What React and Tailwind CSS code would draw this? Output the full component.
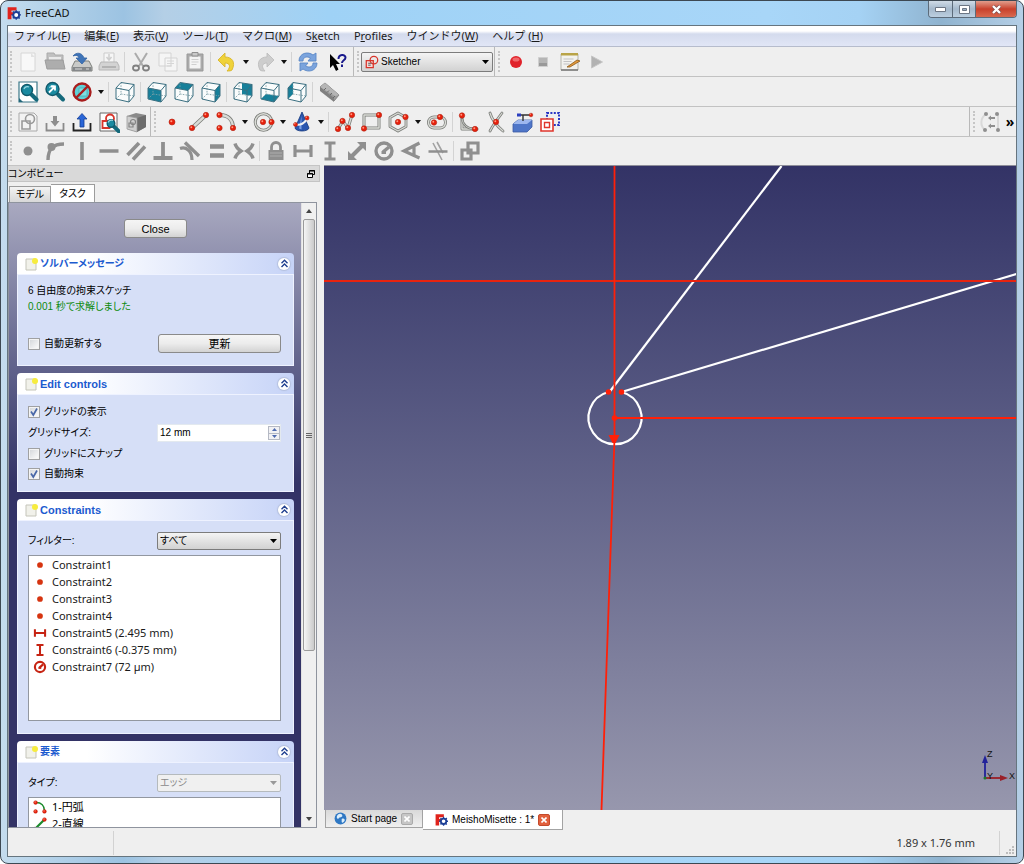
import { useState } from 'react';
import clsx from 'clsx';

/* ---------- icon helpers ---------- */

function Icon({ children, className = 'w-[22px] h-[22px]' }) {
  return (
    <svg viewBox="0 0 22 22" className={clsx('shrink-0', className)} fill="none" aria-hidden="true">
      {children}
    </svg>
  );
}

const Dot = ({ x, y, r = 2.7 }) => (
  <g>
    <circle cx={x} cy={y} r={r} fill="#e8200c" stroke="#b02414" strokeWidth="0.6" />
    <circle cx={x - 0.7} cy={y - 0.8} r={r * 0.35} fill="#ff9a80" />
  </g>
);

// thick grey strokes with a pale core, used by all geometry tools
const Tube = ({ d, w = 3 }) => (
  <g strokeLinecap="round" strokeLinejoin="round">
    <path d={d} stroke="#7c7e7a" strokeWidth={w} />
    <path d={d} stroke="#d9dbd6" strokeWidth={w - 1.6} />
  </g>
);

const cubeFaces = {
  front: '2,7 15,9.5 15,21 2,18',
  top: '2,7 7,1.5 20,3.5 15,9.5',
  right: '15,9.5 20,3.5 20,15 15,21',
  rear: '10,2 20,3.5 20,15 10,13',
  bottom: '2,18 7,13 20,15 15,21',
  left: '2,7 7,1.5 7,13 2,18',
};

function Cube({ face }) {
  return (
    <Icon>
      <polygon points="2,7 7,1.5 20,3.5 20,15 15,21 2,18" fill="#fafcfc" />
      {face && <polygon points={cubeFaces[face]} fill="#17809a" />}
      <path d="M7 1.500V13L2 18M7 13l13 2" stroke="#7fa0a8" strokeWidth="0.900" strokeDasharray="1.600 1.200" />
      <path d="M2 7l5-5.500 13 2-5 6zM2 7v11l13 3V9.500M15 21l5-6V3.500" stroke="#3b6f80" strokeWidth="1" strokeLinejoin="round" />
    </Icon>
  );
}

const AppLogo = ({ className }) => (
  <Icon className={className}>
    <path d="M1 2h14v5H7v3h4v4H7v7H1z" fill="#e0231c" />
    <circle cx="14.500" cy="14" r="4.600" stroke="#1d3f96" strokeWidth="3" fill="#fff" />
    <path d="M14.500 6.500v3M14.500 18.500v3M7 14h3M19 14h3M9.200 8.700l2 2M18 17.500l2 2M9.200 19.300l2-2M18 10.500l2-2" stroke="#1d3f96" strokeWidth="2.200" />
  </Icon>
);

const SketcherLogo = ({ className }) => (
  <Icon className={className}>
    <path d="M2 9h11v11H2z" stroke="#d8342a" strokeWidth="2" fill="#f3d8d6" />
    <circle cx="14" cy="8" r="6" stroke="#d8342a" strokeWidth="2" />
    <path d="M5 13h5M5 16h4" stroke="#555" strokeWidth="1.500" />
  </Icon>
);

const FileIcon = () => (
  <Icon>
    <path d="M4 2h14v18H4z" fill="#f8f8f8" stroke="#d6d6d6" />
    <path d="M14 2l4 4h-4z" fill="#e2e2e2" />
  </Icon>
);
const OpenIcon = () => (
  <Icon>
    <path d="M3 2h7l1 2h8v8H3z" fill="#c0c0c0" stroke="#aaa" />
    <path d="M5 6h12v4H5z" fill="#e9e9e9" />
    <path d="M3 18L1 9h18l2 9z" fill="#adadad" stroke="#9c9c9c" />
  </Icon>
);
const SaveIcon = () => (
  <Icon>
    <path d="M4 10h14l3 6v4H1v-4z" fill="#c9cac8" stroke="#7d7f7b" />
    <path d="M1.500 16h19v4h-19z" fill="#85888a" />
    <path d="M4 18h7M15 18h3" stroke="#d8d8d8" />
    <path d="M2 5c3-4 9-4 11 2h3l-5 6-6-6h3C7 4 5 4 2 5z" fill="#3f74b8" stroke="#3565a3" strokeWidth="0.800" />
  </Icon>
);
const PrintIcon = () => (
  <Icon>
    <path d="M6 2h10v10H6z" fill="#f6f6f6" stroke="#cbcbcb" />
    <path d="M3 11h16l2 4v4H1v-4z" fill="#d3d3d3" stroke="#b6b6b6" />
    <path d="M4 16h14" stroke="#a9a9a9" strokeWidth="1.500" />
    <path d="M11 3v5M8.500 6l2.500 3 2.500-3" stroke="#cecece" strokeWidth="1.500" />
  </Icon>
);
const CutIcon = () => (
  <Icon>
    <path d="M5 2l8 13M17 2L9 15" stroke="#ababab" strokeWidth="2" />
    <ellipse cx="6" cy="17" rx="3" ry="2.500" stroke="#808080" strokeWidth="1.800" />
    <ellipse cx="16" cy="17" rx="3" ry="2.500" stroke="#808080" strokeWidth="1.800" />
  </Icon>
);
const CopyIcon = () => (
  <Icon>
    <path d="M2 2h12v13H2zM8 7h12v13H8z" fill="#f5f5f5" stroke="#d3d3d3" />
    <path d="M10 10h7M10 12.500h7M10 15h5" stroke="#d6d6d6" />
  </Icon>
);
const PasteIcon = () => (
  <Icon>
    <path d="M3 3h16v17H3z" fill="#aaa" stroke="#999" />
    <path d="M5.500 5.500h11v12h-11z" fill="#f4f4f4" />
    <path d="M8 1.500h6v3.500H8z" fill="#c9c9c9" stroke="#909090" />
    <path d="M7.500 8.500h7M7.500 11h7M7.500 13.500h5" stroke="#cfcfcf" />
  </Icon>
);
const UndoIcon = () => (
  <Icon>
    <path d="M2 9l7-7v4c7 0 11 5 7 13-1 1-3 1-5 1 4-4 3-8-2-8v4z" fill="#efd23a" stroke="#d8b52c" strokeWidth="0.900" />
  </Icon>
);
const RedoIcon = () => (
  <Icon>
    <path d="M20 9l-7-7v4C6 6 2 11 6 19c1 1 3 1 5 1-4-4-3-8 2-8v4z" fill="#cdcdcd" stroke="#bdbdbd" strokeWidth="0.900" />
  </Icon>
);
const RefreshIcon = () => (
  <Icon>
    <path d="M2 10c0-8 9-10 14-6l3-2v8h-8l2.500-3C10 5 6 6 6 10z" fill="#7ba4dd" stroke="#5b88c6" strokeWidth="0.900" />
    <path d="M20 12c0 8-9 10-14 6l-3 2v-8h8l-2.500 3c3.500 2 7.500 1 7.500-3z" fill="#7ba4dd" stroke="#5b88c6" strokeWidth="0.900" />
  </Icon>
);
const WhatsThisIcon = () => (
  <Icon>
    <path d="M4 3v14l3-3 3 6 2.500-1.500L10 13h4z" fill="#000" />
    <path d="M12.500 8c0-5 7-5 7-1.500 0 3-3.500 2.500-3.500 5.500M16 13.500v2.500" stroke="#1a1a8c" strokeWidth="2" />
  </Icon>
);
const RecordIcon = () => (
  <Icon>
    <circle cx="11" cy="11" r="6" fill="#e0222a" />
    <ellipse cx="11" cy="8.500" rx="3.500" ry="2" fill="#f0676b" />
  </Icon>
);
const StopIcon = () => (
  <Icon>
    <path d="M6.500 6.500h9v9h-9z" fill="#b5b5b5" stroke="#cfcfcf" />
    <path d="M7 12h8v3H7z" fill="#999" />
  </Icon>
);
const MacroIcon = () => (
  <Icon>
    <path d="M2 3h17v16H2z" fill="#f2f2ee" stroke="#b5b5ac" />
    <path d="M2 2h17v2.500H2z" fill="#b9a447" />
    <path d="M4.500 8h10M4.500 10.500h8M4.500 13h6" stroke="#c3c3c3" />
    <path d="M8 16l10-7 3 1-10 6z" fill="#e39a3b" stroke="#8a5a1c" strokeWidth="0.800" />
    <path d="M2 19h17" stroke="#777" strokeWidth="1.500" />
  </Icon>
);
const PlayIcon = () => (
  <Icon>
    <path d="M5.500 5l11 6-11 6z" fill="#b2b2b2" stroke="#c6c6c6" />
  </Icon>
);

const Lens = ({ x = 10, y = 9, r = 5.5 }) => (
  <g>
    <path d={`M${x + r - 1} ${y + r - 1}l5 5`} stroke="#14697b" strokeWidth="4" strokeLinecap="round" />
    <circle cx={x} cy={y} r={r} fill="#1a8aa0" stroke="#12596b" strokeWidth="1.400" />
    <path d={`M${x - 3} ${y - 1}a3.500 3.500 0 0 1 5-2`} stroke="#9bd8e2" strokeWidth="1.200" />
  </g>
);
const FitAllIcon = () => (
  <Icon>
    <path d="M2 1h18v20H2z" fill="#fff" stroke="#3a7788" strokeWidth="1.200" />
    <path d="M2 17l4 4H2z" fill="#24677a" />
    <Lens />
  </Icon>
);
const FitSelectionIcon = () => (
  <Icon>
    <Lens x={8.5} y={8} r={6.5} />
    <path d="M5 11.500l5-5M7 5.500h4v4" stroke="#fff" strokeWidth="1.800" />
  </Icon>
);
const DrawStyleIcon = () => (
  <Icon>
    <circle cx="11" cy="11" r="8" fill="#5fd0d6" />
    <path d="M8 7h8v8H8z" fill="#7de0e2" stroke="#4aa5ad" strokeWidth="0.700" />
    <circle cx="11" cy="11" r="8.500" stroke="#a81d1d" strokeWidth="2.400" />
    <path d="M17 5L5 17" stroke="#a81d1d" strokeWidth="2.400" />
  </Icon>
);
const MeasureIcon = () => (
  <Icon>
    <path d="M2 6l5-4 14 12-5 6z" fill="#9b9b9b" stroke="#858585" />
    <path d="M2 6l5-4 14 12-4 1z" fill="#b5b5b5" />
    <path d="M2 6v4l14 11v-4z" fill="#808080" />
    <path d="M6 9l2-2M9 11.500l2-2M12 14l2-2M15 17l2-2" stroke="#6a6a6a" />
  </Icon>
);

const NewSketchIcon = () => (
  <Icon>
    <path d="M2 2h15l3 3v15H2z" fill="#f3f3f3" stroke="#a9a9a9" />
    <path d="M5 10h8v8H5z" stroke="#9a9a9a" strokeWidth="1.600" />
    <circle cx="13" cy="8" r="4.500" stroke="#9a9a9a" strokeWidth="1.600" />
  </Icon>
);
const TrayIcon = ({ up }) => (
  <Icon>
    <path d="M2.500 12v7.500h17V12" stroke={up ? '#222' : '#8b8b8b'} strokeWidth="1.800" />
    {up ? (
      <path d="M11 2.500l5 5.500h-3v8H9V8H6z" fill="#2a66d8" stroke="#153f95" strokeWidth="0.800" />
    ) : (
      <path d="M11 15.500L6.500 10H9V5h4v5h2.500z" fill="#8e8e8e" />
    )}
  </Icon>
);
const ViewSketchIcon = () => (
  <Icon>
    <path d="M2 2h17v18H2z" fill="#fdfdfd" stroke="#666" />
    <path d="M4.500 10h7v7h-7z" stroke="#d8342a" strokeWidth="1.800" />
    <circle cx="12" cy="7.500" r="4" stroke="#d8342a" strokeWidth="1.800" />
    <Lens x={13} y={12.5} r={3.8} />
  </Icon>
);
const MapSketchIcon = () => (
  <Icon>
    <path d="M2 5l9-3 10 2v12l-9 5-10-3z" fill="#8a8a8a" />
    <path d="M12 7l9-3v12l-9 5z" fill="#6c6c6c" />
    <path d="M2 5l10 2v14L2 18z" fill="#cfcfcf" stroke="#9a9a9a" strokeWidth="0.800" />
    <circle cx="8" cy="11" r="2.500" stroke="#848484" strokeWidth="1.200" />
    <path d="M4 12h4v4H4z" stroke="#848484" strokeWidth="1.200" />
  </Icon>
);

const PointIcon = () => <Icon><Dot x={11} y={11} r={3} /></Icon>;
const LineIcon = () => (
  <Icon><Tube d="M4 17L18 4" w={4} /><Dot x={4} y={17} /><Dot x={18} y={4} /></Icon>
);
const ArcIcon = () => (
  <Icon><Tube d="M5 4c8 0 13 5 13 13" w={4} /><Dot x={4.5} y={4} /><Dot x={18} y={17} /><Dot x={4.5} y={17} /></Icon>
);
const CircleIcon = () => (
  <Icon>
    <circle cx="10.500" cy="11" r="8.300" stroke="#7c7e7a" strokeWidth="3" />
    <circle cx="10.500" cy="11" r="8.300" stroke="#d9dbd6" strokeWidth="1.400" />
    <Dot x={10} y={11} /><Dot x={18.5} y={11} />
  </Icon>
);
const ConicIcon = () => (
  <Icon>
    <path d="M11 1L4 17c1 4 13 4 14 0z" fill="#2b57b0" stroke="#173a7c" strokeWidth="0.800" />
    <path d="M10.500 5L8 17.500l2.500 1z" fill="#7aa0e4" />
    <path d="M5 13.500c4 1 9-1 11-6" stroke="#f2f2f2" strokeWidth="2.200" />
    <Dot x={4.5} y={13.5} r={2} /><Dot x={16} y={7} r={2} />
  </Icon>
);
const PolylineIcon = () => (
  <Icon>
    <Tube d="M4 18l5-8 5 7 4-13" />
    <Dot x={4} y={18} /><Dot x={8.5} y={10} /><Dot x={14} y={17} /><Dot x={18} y={4} />
  </Icon>
);
const RectIcon = () => (
  <Icon><Tube d="M3 4h15v13H3z" /><Dot x={18} y={4} /><Dot x={3} y={17.5} /></Icon>
);
const PolygonIcon = () => (
  <Icon><Tube d="M10 2l8 4.500v9L10 20l-8-4.500v-9z" w={2.8} /><Dot x={10} y={11} /><Dot x={17.5} y={6} /></Icon>
);
const SlotIcon = () => (
  <Icon><Tube d="M8 6h6a5.500 5.500 0 0 1 0 11H8A5.500 5.500 0 0 1 8 6z" /><Dot x={8} y={11.5} /><Dot x={14} y={6} /></Icon>
);
const FilletIcon = () => (
  <Icon><Tube d="M4 4v14h15" /><Tube d="M4 8c1 6 5 9 11 10" w={2.4} /><Dot x={4} y={4.5} /><Dot x={17} y={18} /></Icon>
);
const TrimIcon = () => (
  <Icon><Tube d="M5 2c2 7 7 13 13 18M17 2c-3 4-9 12-12 18" w={2.8} /><Dot x={11} y={11} /></Icon>
);
const ExternalIcon = () => (
  <Icon>
    <path d="M1 13l5-4h14v7l-5 5H1z" fill="#4f76c8" stroke="#3c5ca2" strokeWidth="0.800" />
    <path d="M1 13l5-4h14l-5 4z" fill="#9db7ee" />
    <path d="M11 4v6M7 4h12" stroke="#333" strokeWidth="1.400" />
    <Dot x={19} y={4} r={1.8} />
    <path d="M5 2.500h4v3H5z" fill="#2b3fbf" />
  </Icon>
);
const ConstructionIcon = () => (
  <Icon>
    <path d="M8 2h12v12H8z" stroke="#2936c4" strokeWidth="2" strokeDasharray="2 1.400" />
    <path d="M2 8h12v12H2z" fill="#fff" stroke="#e0362c" strokeWidth="1.600" />
    <path d="M5.500 11.500h5v5h-5z" stroke="#e0362c" strokeWidth="1.400" />
  </Icon>
);
const ApproxIcon = () => (
  <Icon>
    <path d="M6 3C0 7 0 15 5 19M18 3v16" stroke="#d9d9d9" strokeWidth="2" />
    <path d="M15 7H9M15 15H9" stroke="#8f8f8f" strokeWidth="1.800" />
    <path d="M11 4.500L8 7l3 2.500zM11 12.500L8 15l3 2.500z" fill="#8f8f8f" />
    {[[6, 3], [17, 3], [5, 19], [18, 19]].map(([x, y]) => (
      <circle key={`${x}-${y}`} cx={x} cy={y} r="2" fill="#8f8f8f" />
    ))}
  </Icon>
);

/* constraint glyphs take their colour from the text colour */
const constraintShapes = {
  coincident: <circle cx="11" cy="11" r="4.500" fill="currentColor" />,
  pointOnObject: (
    <g>
      <path d="M4 20C4 9 9 4 20 4" stroke="currentColor" strokeWidth="3.400" />
      <circle cx="7.500" cy="7" r="4" fill="currentColor" />
    </g>
  ),
  vertical: <path d="M11 2v18" stroke="currentColor" strokeWidth="3.600" />,
  horizontal: <path d="M1.500 11h19" stroke="currentColor" strokeWidth="3.600" />,
  parallel: <path d="M2.500 15L14 3M8 19.500L20 6.500" stroke="currentColor" strokeWidth="3.600" />,
  perpendicular: <path d="M11 2v16M1.500 18h19" stroke="currentColor" strokeWidth="3.800" />,
  tangent: (
    <g stroke="currentColor">
      <path d="M6 2.500L20 16" strokeWidth="3.400" />
      <path d="M1 8.500c6-2 12 2 12 11.500" strokeWidth="3.200" />
    </g>
  ),
  equal: <path d="M4 6.500h14M4 15.500h14" stroke="currentColor" strokeWidth="4.600" />,
  symmetric: <path d="M2 3.500c1 4 3 5.500 6 7.500-3 2-5 3.500-6 7.500M20 3.500c-1 4-3 5.500-6 7.500 3 2 5 3.500 6 7.500" stroke="currentColor" strokeWidth="3.400" />,
  lock: (
    <g>
      <path d="M3.500 10h15v10h-15z" fill="currentColor" />
      <path d="M6.500 11V7a4.500 4.500 0 0 1 9 0v4" stroke="currentColor" strokeWidth="2.800" />
      <path d="M5 13h12M5 16h12" stroke="#b5b5b5" strokeWidth="0.800" />
    </g>
  ),
  hdist: <path d="M3 5v12M19 5v12M3 11h16" stroke="currentColor" strokeWidth="3.200" />,
  vdist: <path d="M5.500 3h11M5.500 19h11M11 3v16" stroke="currentColor" strokeWidth="3.200" />,
  distance: (
    <g>
      <path d="M6 16L16 6" stroke="currentColor" strokeWidth="4" />
      <path d="M20 2v9l-9-9zM2 20v-9l9 9z" fill="currentColor" />
    </g>
  ),
  radius: (
    <g stroke="currentColor" strokeWidth="3.400">
      <circle cx="11" cy="11" r="8" />
      <path d="M10 12l6-5" />
      <path d="M8.500 12.500h4.500" strokeWidth="3" />
    </g>
  ),
  angle: <path d="M19.500 3L4 11l15.500 7M14 5.500v10.500" stroke="currentColor" strokeWidth="3.200" />,
  snell: (
    <g stroke="currentColor">
      <path d="M1.500 11.500h19" strokeWidth="2.600" />
      <path d="M6 3l9 17M10 2l6 11" strokeWidth="1.600" opacity="0.800" />
    </g>
  ),
  internal: <path d="M9 3h10v10H9zM3 10h9v9H3z" stroke="currentColor" strokeWidth="3.200" />,
};

function Constraint({ kind, className }) {
  return <Icon className={className}>{constraintShapes[kind]}</Icon>;
}

/* ---------- toolbar pieces ---------- */

function ToolButton({ label, menu, children }) {
  return (
    <div className="flex items-center shrink-0">
      <button type="button" aria-label={label} title={label} className="w-[27px] h-[26px] flex items-center justify-center hover:bg-white/70 rounded">
        {children}
      </button>
      {menu && (
        <button type="button" aria-label={`${label} options`} className="w-[11px] h-[26px] flex items-center justify-center">
          <svg viewBox="0 0 6 4" className="w-[6px] h-[4px]"><path d="M0 0h6L3 4z" fill="#111" /></svg>
        </button>
      )}
    </div>
  );
}

const Handle = () => (
  <div className="w-[6px] shrink-0 self-stretch py-1 flex justify-center">
    <div className="border-l-2 border-dotted border-[#c6c6c6]" />
  </div>
);
const Sep = () => <div className="w-px mx-[2px] h-5 shrink-0 bg-[#d3d3d3]" />;
const Edge = () => <div className="w-px mx-px shrink-0 self-stretch bg-[#b9b9b9]" />;

function ToolRow({ children, last }) {
  return (
    <div className={clsx('flex items-center shrink-0', last ? 'h-[28px]' : 'h-[30px] border-b border-[#c2c2c2]')}>
      {children}
    </div>
  );
}

/* ---------- task panel pieces ---------- */

function TaskGroup({ title, lang = 'ja', children }) {
  const [open, setOpen] = useState(true);
  return (
    <section>
      <header className="h-[22px] rounded-t flex items-center pl-2 pr-1 border-b border-[#eef2ff] bg-linear-to-r from-white from-25% to-[#c6d3f7]">
        <svg viewBox="0 0 14 14" className="w-[14px] h-[14px] shrink-0" aria-hidden="true">
          <path d="M1 2h10v11H1z" fill="#f1f1ea" stroke="#c5c5ba" />
          <circle cx="10" cy="4" r="3" fill="#f7ec3e" />
        </svg>
        <h2 className={clsx('ml-px flex-1 leading-4 font-bold text-[#1c5bcf]', lang === 'ja' ? 'text-[10px]' : 'text-[11px]')}>{title}</h2>
        <button
          type="button"
          aria-label={`Toggle ${title}`}
          onClick={() => setOpen(!open)}
          className="w-3 h-3 rounded-full bg-white flex items-center justify-center shadow-[0_0_1px_1px_#b4c0de]"
        >
          <svg viewBox="0 0 9 9" className="w-[9px] h-[9px]" fill="none" stroke="#1f3f8f" strokeWidth="1.400">
            <path d="M1.500 4.300l3-3 3 3M1.500 8l3-3 3 3" />
          </svg>
        </button>
      </header>
      {open && <div className="bg-[#d6dff7] border border-t-0 border-[#eef2ff] pl-[10px] pr-3">{children}</div>}
    </section>
  );
}

function CheckBox({ label, defaultChecked }) {
  return (
    <label className="h-4 flex items-center gap-1">
      <span className="relative w-3 h-3 shrink-0">
        <input
          type="checkbox"
          defaultChecked={defaultChecked}
          className="peer block appearance-none w-3 h-3 border border-[#a0a1a3] bg-linear-to-br from-[#d2d5d9] to-white shadow-[inset_0_0_0_1px_#f4f4f4]"
        />
        <svg viewBox="0 0 12 12" className="hidden peer-checked:block absolute inset-0 w-3 h-3 pointer-events-none" fill="none">
          <path d="M3 5.500l2.300 3.500L9 2.500" stroke="#4a68a8" strokeWidth="1.700" />
        </svg>
      </span>
      {label}
    </label>
  );
}

function Select({ id, label, options, disabled, icon, className }) {
  return (
    <div className={clsx('relative', className)}>
      {icon}
      <select
        id={id}
        aria-label={label}
        disabled={disabled}
        className={clsx(
          "block appearance-none w-full h-full border rounded-[2px] text-[10px] leading-4 outline-none font-['Liberation_Sans','Noto_Sans_CJK_JP',sans-serif]",
          icon ? 'pl-[19px]' : 'pl-[2px]',
          disabled
            ? 'border-[#b5babd] bg-[#f0f0f0] text-[#8a8a8a]'
            : 'border-[#7c7c7c] bg-linear-to-b from-[#f4f4f4] to-[#d2d2d2] text-black'
        )}
      >
        {options.map(o => <option key={o}>{o}</option>)}
      </select>
      <svg viewBox="0 0 7 4" className="absolute right-1 top-1/2 -mt-[2px] w-[7px] h-[4px] pointer-events-none">
        <path d="M0 0h7L3.500 4z" fill={disabled ? '#999' : '#000'} />
      </svg>
    </div>
  );
}

const PanelButton = ({ className, children }) => (
  <button
    type="button"
    className={clsx('h-[19px] border border-[#8a8a8a] rounded-[3px] bg-linear-to-b from-[#f5f5f5] via-[#ececec] to-[#d3d3d3] text-[11px] leading-4 text-black', className)}
  >
    {children}
  </button>
);

/* ---------- data ---------- */

const menus = [
  ['ファイル(', 'F', ')'],
  ['編集(', 'E', ')'],
  ['表示(', 'V', ')'],
  ['ツール(', 'T', ')'],
  ['マクロ(', 'M', ')'],
  ['S', 'k', 'etch'],
  ['P', 'r', 'ofiles'],
  ['ウインドウ(', 'W', ')'],
  ['ヘルプ (', 'H', ')'],
];

const constraints = [
  { name: 'Constraint1', kind: 'coincident' },
  { name: 'Constraint2', kind: 'coincident' },
  { name: 'Constraint3', kind: 'coincident' },
  { name: 'Constraint4', kind: 'coincident' },
  { name: 'Constraint5 (2.495 mm)', kind: 'hdist' },
  { name: 'Constraint6 (-0.375 mm)', kind: 'vdist' },
  { name: 'Constraint7 (72 µm)', kind: 'radius' },
];

const geometricKinds = ['coincident', 'pointOnObject', 'vertical', 'horizontal', 'parallel', 'perpendicular', 'tangent', 'equal', 'symmetric'];
const dimensionKinds = ['lock', 'hdist', 'vdist', 'distance', 'radius', 'angle', 'snell'];

/* ---------- window sections ---------- */

function TitleBar() {
  return (
    <div className="h-6 shrink-0 flex items-start">
      <div className="flex items-center gap-1 h-6 flex-1">
        <AppLogo className="w-[14px] h-[14px]" />
        <h1 className="text-[11px] leading-4 text-[#111]">FreeCAD</h1>
      </div>
      <div className="flex h-[17px] border border-t-0 border-[#5c6b7a] rounded-b-[4px] overflow-hidden">
        <button type="button" aria-label="Minimize" className="w-6 border-r border-[#5c6b7a] bg-linear-to-b from-[#cfdbe6] via-[#a5b9cc] to-[#bccfe0] flex items-center justify-center">
          <svg viewBox="0 0 11 5" className="w-[11px] h-[5px]"><path d="M0.500 0.500h10v4h-10z" fill="#fff" stroke="#6c7684" /></svg>
        </button>
        <button type="button" aria-label="Maximize" className="w-[23px] border-r border-[#5c6b7a] bg-linear-to-b from-[#cfdbe6] via-[#a5b9cc] to-[#bccfe0] flex items-center justify-center">
          <svg viewBox="0 0 11 9" className="w-[11px] h-[9px]"><path d="M0.500 0.500h10v8h-10z" fill="#fff" stroke="#6c7684" /><path d="M3.500 3.500h4v2h-4z" fill="#9db2c6" stroke="#6c7684" /></svg>
        </button>
        <button type="button" aria-label="Close window" className="w-10 bg-linear-to-b from-[#e09c8c] via-[#c8402c] to-[#d9694f] flex items-center justify-center">
          <svg viewBox="0 0 11 9" className="w-[11px] h-[9px]" fill="none">
            <path d="M2 1l7 7M9 1L2 8" stroke="#7b4b4b" strokeWidth="3.600" />
            <path d="M2 1l7 7M9 1L2 8" stroke="#fff" strokeWidth="2.400" />
          </svg>
        </button>
      </div>
    </div>
  );
}

function MenuBar() {
  return (
    <nav className="h-[21px] shrink-0 flex items-center gap-[14px] pl-[6px] border-b border-[#b6bccc] bg-linear-to-b from-white from-25% via-[#d4dbed] via-40% to-[#e1e6f6] text-[11px] leading-4 text-[#1a1a1a]">
      {menus.map(([before, key, after]) => (
        <button type="button" key={before + key} className="whitespace-nowrap">
          {before}<u>{key}</u>{after}
        </button>
      ))}
    </nav>
  );
}

function Toolbars() {
  return (
    <div className="shrink-0 bg-[#efefef]">
      <ToolRow>
        <Handle />
        <ToolButton label="New"><FileIcon /></ToolButton>
        <ToolButton label="Open"><OpenIcon /></ToolButton>
        <ToolButton label="Save"><SaveIcon /></ToolButton>
        <ToolButton label="Print"><PrintIcon /></ToolButton>
        <Sep />
        <ToolButton label="Cut"><CutIcon /></ToolButton>
        <ToolButton label="Copy"><CopyIcon /></ToolButton>
        <ToolButton label="Paste"><PasteIcon /></ToolButton>
        <Sep />
        <ToolButton label="Undo" menu><UndoIcon /></ToolButton>
        <ToolButton label="Redo" menu><RedoIcon /></ToolButton>
        <Sep />
        <ToolButton label="Refresh"><RefreshIcon /></ToolButton>
        <div className="px-[2px]">
          <ToolButton label="What's this?"><WhatsThisIcon /></ToolButton>
        </div>
        <Edge />
        <Handle />
        <Select
          label="Workbench"
          options={['Sketcher', 'Part', 'Part Design', 'Draft']}
          className="w-[132px] h-5"
          icon={<SketcherLogo className="absolute left-1 top-[3px] w-[14px] h-[14px] pointer-events-none" />}
        />
        <Edge />
        <Handle />
        <ToolButton label="Record macro"><RecordIcon /></ToolButton>
        <ToolButton label="Stop macro"><StopIcon /></ToolButton>
        <ToolButton label="Macros"><MacroIcon /></ToolButton>
        <ToolButton label="Run macro"><PlayIcon /></ToolButton>
      </ToolRow>

      <ToolRow>
        <Handle />
        <ToolButton label="Fit all"><FitAllIcon /></ToolButton>
        <ToolButton label="Fit selection"><FitSelectionIcon /></ToolButton>
        <ToolButton label="Draw style" menu><DrawStyleIcon /></ToolButton>
        <Sep />
        <ToolButton label="Axonometric"><Cube /></ToolButton>
        <Sep />
        <ToolButton label="Front"><Cube face="front" /></ToolButton>
        <ToolButton label="Top"><Cube face="top" /></ToolButton>
        <ToolButton label="Right"><Cube face="right" /></ToolButton>
        <Sep />
        <ToolButton label="Rear"><Cube face="rear" /></ToolButton>
        <ToolButton label="Bottom"><Cube face="bottom" /></ToolButton>
        <ToolButton label="Left"><Cube face="left" /></ToolButton>
        <Sep />
        <ToolButton label="Measure distance"><MeasureIcon /></ToolButton>
      </ToolRow>

      <ToolRow>
        <Handle />
        <ToolButton label="New sketch"><NewSketchIcon /></ToolButton>
        <ToolButton label="Edit sketch"><TrayIcon /></ToolButton>
        <ToolButton label="Leave sketch"><TrayIcon up /></ToolButton>
        <ToolButton label="View sketch"><ViewSketchIcon /></ToolButton>
        <ToolButton label="Map sketch to face"><MapSketchIcon /></ToolButton>
        <Edge />
        <Handle />
        <ToolButton label="Point"><PointIcon /></ToolButton>
        <ToolButton label="Line"><LineIcon /></ToolButton>
        <ToolButton label="Arc" menu><ArcIcon /></ToolButton>
        <ToolButton label="Circle" menu><CircleIcon /></ToolButton>
        <ToolButton label="Conics" menu><ConicIcon /></ToolButton>
        <Sep />
        <ToolButton label="Polyline"><PolylineIcon /></ToolButton>
        <ToolButton label="Rectangle"><RectIcon /></ToolButton>
        <ToolButton label="Polygon" menu><PolygonIcon /></ToolButton>
        <ToolButton label="Slot"><SlotIcon /></ToolButton>
        <Sep />
        <ToolButton label="Fillet"><FilletIcon /></ToolButton>
        <ToolButton label="Trim"><TrimIcon /></ToolButton>
        <ToolButton label="External geometry"><ExternalIcon /></ToolButton>
        <ToolButton label="Construction mode"><ConstructionIcon /></ToolButton>
        <div className="flex-1" />
        <Edge />
        <Handle />
        <ToolButton label="B-spline tools"><ApproxIcon /></ToolButton>
        <button type="button" aria-label="More tools" className="w-3 text-[14px] leading-4 font-bold text-black">»</button>
      </ToolRow>

      <ToolRow last>
        <Handle />
        <div className="flex items-center text-[#8f8f8f]">
          {geometricKinds.map(kind => (
            <ToolButton key={kind} label={kind}><Constraint kind={kind} /></ToolButton>
          ))}
          <Sep />
          {dimensionKinds.map(kind => (
            <ToolButton key={kind} label={kind}><Constraint kind={kind} /></ToolButton>
          ))}
          <Sep />
          <ToolButton label="internal"><Constraint kind="internal" /></ToolButton>
        </div>
      </ToolRow>
    </div>
  );
}

function ScrollBar() {
  return (
    <div className="w-[15px] shrink-0 flex flex-col bg-[#f0f0f0] border-l border-[#e2e2e2]">
      <button type="button" aria-label="Scroll up" className="h-4 flex items-center justify-center shrink-0">
        <svg viewBox="0 0 6 4" className="w-[6px] h-[4px]"><path d="M0 4h6L3 0z" fill="#444" /></svg>
      </button>
      <div className="flex-1 min-h-0">
        <div className="h-[73%] mx-px border border-[#9b9b9b] rounded-[2px] bg-linear-to-r from-[#f5f5f5] to-[#cbcbcb] flex flex-col items-center justify-center gap-px">
          <div className="w-[6px] h-px bg-[#666]" />
          <div className="w-[6px] h-px bg-[#666]" />
          <div className="w-[6px] h-px bg-[#666]" />
        </div>
      </div>
      <button type="button" aria-label="Scroll down" className="h-4 flex items-center justify-center shrink-0">
        <svg viewBox="0 0 6 4" className="w-[6px] h-[4px]"><path d="M0 0h6L3 4z" fill="#444" /></svg>
      </button>
    </div>
  );
}

function ComboView() {
  return (
    <aside className="w-[312px] shrink-0 flex flex-col pb-[2px] text-[10px] leading-4 text-black font-['Liberation_Sans','Noto_Sans_CJK_JP',sans-serif] [font-feature-settings:'palt']">
      <div className="h-[17px] shrink-0 flex items-center justify-between pr-1 bg-[#d9d9d9] border border-l-0 border-[#c4c4c4]">
        <span>コンボビュー</span>
        <button type="button" aria-label="Float panel">
          <svg viewBox="0 0 8 8" className="w-2 h-2" fill="none" stroke="#000">
            <path d="M2.500 3V0.500h5v4H6M2 1h6" />
            <path d="M0.500 3.500h5v4h-5zM0 4h6" fill="#fff" />
          </svg>
        </button>
      </div>
      <div role="tablist" className="shrink-0 flex items-end pl-px h-5">
        <button type="button" role="tab" aria-selected="false" className="w-[42px] h-4 border border-b-0 border-[#9c9c9c] bg-linear-to-b from-[#f3f3f3] to-[#d8d8d8]">モデル</button>
        <button type="button" role="tab" aria-selected="true" className="w-[44px] h-[18px] border border-b-0 border-l-0 border-[#9c9c9c] bg-white">タスク</button>
      </div>
      <div className="flex-1 min-h-0 mr-[3px] border border-[#8f949e] flex">
        <div className="flex-1 min-w-0 overflow-hidden pl-2 pr-[7px] bg-linear-to-b from-[#a9a9c0] to-[#333366] to-45%">
          <div className="pt-4 flex justify-center">
            <PanelButton className="w-[63px]">Close</PanelButton>
          </div>
          <div className="mt-[15px] flex flex-col gap-[7px]">
            <TaskGroup title="ソルバーメッセージ">
              <p className="pt-2">6 自由度の拘束スケッチ</p>
              <p className="text-[#0b8a0b]">0.001 秒で求解しました</p>
              <div className="mt-[19px] pb-3 flex items-center justify-between">
                <CheckBox label="自動更新する" />
                <PanelButton className="w-[123px]">更新</PanelButton>
              </div>
            </TaskGroup>

            <TaskGroup title="Edit controls" lang="en">
              <div className="pt-[9px] pb-[9px] flex flex-col gap-1">
                <CheckBox label="グリッドの表示" defaultChecked />
                <div className="flex items-center justify-between">
                  <label htmlFor="grid-size">グリッドサイズ:</label>
                  <div className="w-[124px] h-[18px] flex bg-white border border-[#e3e9ef]">
                    <input id="grid-size" type="text" defaultValue="12 mm" className="flex-1 min-w-0 pl-[2px] outline-none" />
                    <div className="w-3 my-px flex flex-col border border-[#b5b9c4] bg-[#f1f1f4]">
                      <button type="button" aria-label="Increase" className="flex-1 flex items-center justify-center border-b border-[#b5b9c4]">
                        <svg viewBox="0 0 5 3" className="w-[5px] h-[3px]"><path d="M0 3h5L2.500 0z" fill="#4f6bb0" /></svg>
                      </button>
                      <button type="button" aria-label="Decrease" className="flex-1 flex items-center justify-center">
                        <svg viewBox="0 0 5 3" className="w-[5px] h-[3px]"><path d="M0 0h5L2.500 3z" fill="#4f6bb0" /></svg>
                      </button>
                    </div>
                  </div>
                </div>
                <CheckBox label="グリッドにスナップ" />
                <CheckBox label="自動拘束" defaultChecked />
              </div>
            </TaskGroup>

            <TaskGroup title="Constraints" lang="en">
              <div className="pt-[11px] pb-3">
                <div className="flex items-center justify-between">
                  <label htmlFor="filter">フィルター:</label>
                  <Select id="filter" options={['すべて']} className="w-[124px] h-[18px]" />
                </div>
                <ul className="mt-[5px] h-[166px] bg-white border border-[#9297a0] text-[11px] font-['Noto_Sans','Noto_Sans_CJK_JP',sans-serif]">
                  {constraints.map(c => (
                    <li key={c.name} className="h-[17px] flex items-center gap-[5px] pl-1 text-[#1a1a1a]">
                      <Constraint
                        kind={c.kind}
                        className={c.kind === 'coincident' ? 'w-[14px] h-[14px] text-[#d63410]' : 'w-[14px] h-[14px] text-[#c62312]'}
                      />
                      {c.name}
                    </li>
                  ))}
                </ul>
              </div>
            </TaskGroup>

            <TaskGroup title="要素">
              <div className="pt-[11px] pb-3">
                <div className="flex items-center justify-between">
                  <label htmlFor="element-type">タイプ:</label>
                  <Select id="element-type" options={['エッジ']} className="w-[124px] h-[18px]" disabled />
                </div>
                <ul className="mt-[5px] h-[166px] bg-white border border-[#9297a0] text-[11px] font-['Noto_Sans','Noto_Sans_CJK_JP',sans-serif]">
                  <li className="h-[17px] flex items-center gap-[5px] pl-1">
                    <Icon className="w-[14px] h-[14px]">
                      <path d="M5 4c8 0 13 5 13 13" stroke="#1b8a2c" strokeWidth="2.400" />
                      <Dot x={4} y={4} r={3} /><Dot x={18} y={18} r={3} /><Dot x={4} y={18} r={3} />
                    </Icon>
                    1-円弧
                  </li>
                  <li className="h-[17px] flex items-center gap-[5px] pl-1">
                    <Icon className="w-[14px] h-[14px]">
                      <path d="M3 19L18 4" stroke="#1b8a2c" strokeWidth="3.400" />
                      <Dot x={18} y={4} r={3} /><Dot x={3} y={19} r={3} />
                    </Icon>
                    2-直線
                  </li>
                </ul>
              </div>
            </TaskGroup>
          </div>
        </div>
        <ScrollBar />
      </div>
    </aside>
  );
}

function SketchView() {
  return (
    <div className="relative flex-1 min-h-0 overflow-hidden border-t border-[#8d8d99] bg-linear-to-b from-[#333366] to-[#9797ad]">
      <svg viewBox="0 0 693 644" preserveAspectRatio="xMidYMid slice" className="block w-full h-full" fill="none">
        <g stroke="#fff" strokeWidth="2.200">
          <path d="M458 0L286 226" />
          <path d="M693 108L298 226" />
          <path d="M285 226A26.500 26.500 0 1 0 298 226" />
        </g>
        <g stroke="#ff2008" strokeWidth="1.800">
          <path d="M0 115H693" stroke="#e8230f" />
          <path d="M291 0V272L278 644" />
          <path d="M291 252H693" />
        </g>
        <g fill="#ff2008">
          <circle cx="285" cy="226" r="2.800" />
          <circle cx="298" cy="226" r="2.800" />
          <circle cx="291" cy="252" r="2.800" />
          <path d="M285 269h11l-4 8h-3z" />
        </g>
      </svg>
      <svg viewBox="0 0 40 40" className="absolute right-0 bottom-[24px] w-10 h-10" fill="none">
        <path d="M9 32V12" stroke="#22229a" strokeWidth="1.800" />
        <path d="M9 9l3 8H6z" fill="#22229a" />
        <path d="M9 32h17" stroke="#9a1f28" strokeWidth="1.800" />
        <path d="M32 32l-8-3v6z" fill="#9a1f28" />
        <circle cx="9" cy="32" r="1.500" fill="#1c7a2a" />
        <g fill="#111" fontFamily="Liberation Sans, sans-serif" fontSize="9">
          <text x="11" y="11">Z</text>
          <text x="11" y="33">Y</text>
          <text x="33" y="33">X</text>
        </g>
      </svg>
    </div>
  );
}

function DocumentTabs() {
  return (
    <div role="tablist" className="shrink-0 h-5 pl-px flex items-start text-[10px] leading-4 text-black font-['Liberation_Sans','Noto_Sans_CJK_JP',sans-serif]">
      <div className="h-[18px] w-[98px] flex items-center gap-1 pl-2 border border-t-0 border-[#a3a3a3] bg-linear-to-b from-[#d9d9d9] to-[#f0f0f0]">
        <Icon className="w-[13px] h-[13px]">
          <circle cx="11" cy="11" r="10" fill="#2f78c4" />
          <path d="M6 5c4-4 9-1 8 2-2 3-6 1-6 4-2 2-5-2-2-6zM13 12c3-2 6 0 5 3-2 3-4 4-5 2z" fill="#dceefb" />
        </Icon>
        <button type="button" role="tab" aria-selected="false" className="whitespace-nowrap">Start page</button>
        <CloseMark label="Close Start page" />
      </div>
      <div className="h-5 w-[140px] flex items-center gap-1 pl-3 border border-t-0 border-l-0 border-[#a3a3a3] bg-white">
        <AppLogo className="w-[13px] h-[13px]" />
        <button type="button" role="tab" aria-selected="true" className="whitespace-nowrap">MeishoMisette : 1*</button>
        <CloseMark label="Close MeishoMisette" active />
      </div>
    </div>
  );
}

function CloseMark({ label, active }) {
  return (
    <button
      type="button"
      aria-label={label}
      className={clsx('w-3 h-3 shrink-0 rounded-[2px] border flex items-center justify-center', active ? 'bg-[#e2613d] border-[#c44a2b]' : 'bg-[#c6c6c6] border-[#aaa]')}
    >
      <svg viewBox="0 0 6 6" className="w-[6px] h-[6px]"><path d="M0.500 0.500l5 5M5.500 0.500l-5 5" stroke="#fff" strokeWidth="1.600" /></svg>
    </button>
  );
}

function StatusBar() {
  return (
    <footer className="h-[26px] shrink-0 flex items-center bg-[#efefef]">
      <div className="w-[106px] h-6 border-r border-[#d2d2d2]" />
      <div className="flex-1" />
      <output className="text-[11px] leading-4 text-[#333]">1.89 x 1.76 mm</output>
      <div className="ml-6 w-px h-6 bg-[#d2d2d2]" />
      <div className="w-4 h-full flex items-end justify-end p-[2px]">
        <svg viewBox="0 0 8 8" className="w-2 h-2" fill="#bdbdbd">
          <path d="M6 0h2v2H6zM3 3h2v2H3zM6 3h2v2H6zM0 6h2v2H0zM3 6h2v2H3zM6 6h2v2H6z" />
        </svg>
      </div>
    </footer>
  );
}

export default function App() {
  return (
    <div className="h-screen flex flex-col overflow-hidden rounded-lg border border-[#3d4852] bg-[linear-gradient(90deg,#c4dcee,#9cc3e2_12%,#b4cfe6_16%,#9fd2f6_32%,#a8d6f8_75%,#a5d2f4_84%,#8fb3cf_92%,#b5cfe6)] px-[6px] pb-[6px] font-['Noto_Sans','Noto_Sans_CJK_JP',sans-serif]">
      <TitleBar />
      <div className="flex-1 min-h-0 flex flex-col border border-[#66757f] bg-[#efefef]">
        <MenuBar />
        <Toolbars />
        <div className="flex-1 min-h-0 flex">
          <ComboView />
          <main className="flex-1 min-w-0 ml-1 flex flex-col">
            <SketchView />
            <DocumentTabs />
          </main>
        </div>
        <StatusBar />
      </div>
    </div>
  );
}
